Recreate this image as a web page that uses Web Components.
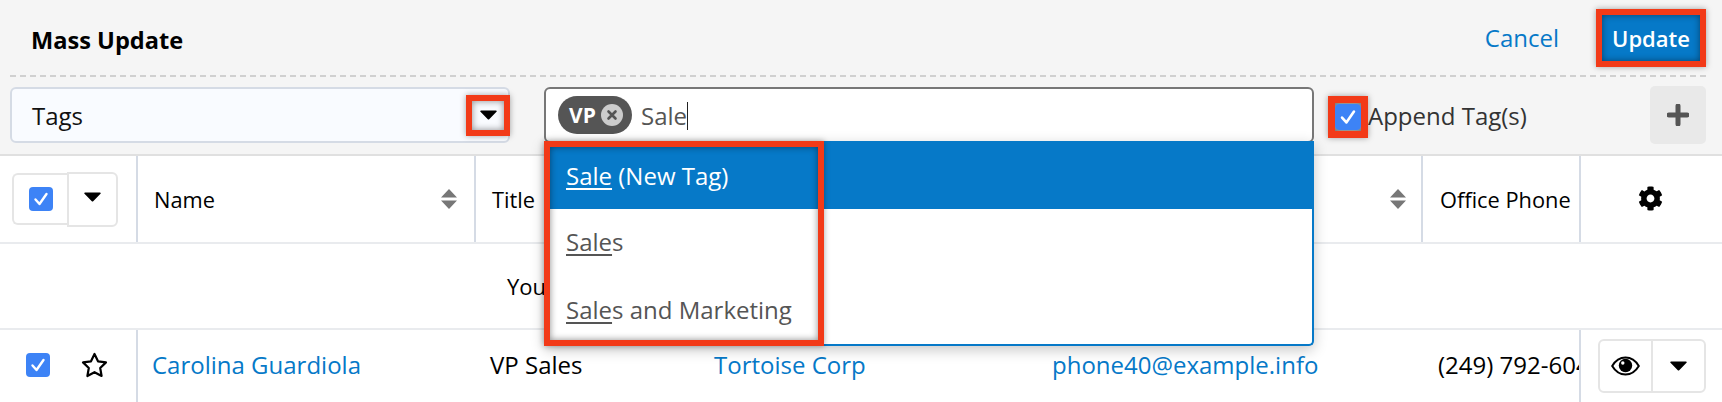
<!DOCTYPE html>
<html>
<head>
<meta charset="utf-8">
<title>Mass Update</title>
<style>
    html, body { margin: 0; padding: 0; background: #fff; overflow: hidden; height: 402px; }
    body { font-family: "Open Sans", "Liberation Sans", sans-serif; }
</style>
</head>
<body>
<mass-update>
    <tag-select></tag-select>
    <tag-input></tag-input>
</mass-update>
<list-table></list-table>

<script>
const caret = `<svg width="17" height="10" viewBox="0 0 17 10"><path d="M1 .5h15c.7 0 1 .8.5 1.3L9.2 9.2c-.4.4-1 .4-1.4 0L.5 1.8C0 1.3.3.5 1 .5z" fill="#000"/></svg>`;
const sortIcon = `<svg width="16" height="20" viewBox="0 0 16 20"><path d="M8 0l8 8.5H0zM0 11.5h16L8 20z" fill="#777"/></svg>`;
const checkBox = (size) => `<svg width="${size}" height="${size}" viewBox="0 0 24 24"><rect width="24" height="24" rx="4" fill="#3d83f6"/><path d="M6.5 12.5l4 4.5 7-10" fill="none" stroke="#fff" stroke-width="2.4" stroke-linecap="round" stroke-linejoin="round"/></svg>`;
const gear = `<svg width="25" height="25" viewBox="0 0 512 512"><path d="M487.4 315.7l-42.6-24.6c4.3-23.2 4.3-47 0-70.2l42.6-24.6c4.9-2.8 7.1-8.6 5.5-14-11.1-35.6-30-67.8-54.7-94.6-3.8-4.1-10-5.1-14.8-2.3L380.8 110c-17.9-15.4-38.5-27.3-60.8-35.1V25.8c0-5.6-3.9-10.5-9.4-11.7-36.7-8.2-74.3-7.8-109.2 0-5.5 1.2-9.4 6.1-9.4 11.7V75c-22.2 7.9-42.8 19.8-60.8 35.1L88.7 85.5c-4.9-2.8-11-1.9-14.8 2.3-24.7 26.7-43.6 58.9-54.7 94.6-1.7 5.4.6 11.2 5.5 14L67.3 221c-4.3 23.2-4.3 47 0 70.2l-42.6 24.6c-4.9 2.8-7.1 8.6-5.5 14 11.1 35.6 30 67.8 54.7 94.6 3.8 4.1 10 5.1 14.8 2.3l42.6-24.6c17.9 15.4 38.5 27.3 60.8 35.1v49.2c0 5.6 3.9 10.5 9.4 11.7 36.7 8.2 74.3 7.8 109.2 0 5.5-1.2 9.4-6.1 9.4-11.7v-49.2c22.2-7.9 42.8-19.8 60.8-35.1l42.6 24.6c4.9 2.8 11 1.9 14.8-2.3 24.7-26.7 43.6-58.9 54.7-94.6 1.5-5.5-.7-11.3-5.6-14.1zM256 336c-44.1 0-80-35.9-80-80s35.9-80 80-80 80 35.9 80 80-35.9 80-80 80z" fill="#000"/></svg>`;
const eye = `<svg width="29" height="20" viewBox="0 0 29 20"><path d="M1.2 10C4.5 4.4 9 1.5 14.5 1.5S24.5 4.4 27.8 10c-3.3 5.6-7.8 8.5-13.3 8.5S4.500 15.600 1.200 10z" fill="none" stroke="#000" stroke-width="2"/><circle cx="14.500" cy="9.500" r="6.700" fill="#000"/><circle cx="11.800" cy="7" r="1.700" fill="#fff"/></svg>`;
const star = `<svg width="27" height="26" viewBox="0 0 27 26"><path d="M13.500 2l3.500 7.300 8 1.100-5.800 5.600 1.400 8-7.100-3.800-7.100 3.800 1.400-8L2 10.400l8-1.100z" fill="none" stroke="#000" stroke-width="2.200" stroke-linejoin="round"/></svg>`;

// red annotation frame, sits in flow round whatever is slotted
class CallOut extends HTMLElement {
    connectedCallback() {
        this.attachShadow({ mode: 'open' }).innerHTML = `
        <style>
            :host {
                display: inline-flex;
                box-sizing: border-box;
                border: 6px solid #f23a18;
                box-shadow: 0 0 6px rgba(0,0,0,.35), inset 0 0 7px rgba(0,0,0,.45);
                align-items: center;
                justify-content: center;
            }
        </style>
        <slot></slot>`;
    }
}

class MassUpdate extends HTMLElement {
    connectedCallback() {
        this.attachShadow({ mode: 'open' }).innerHTML = `
        <style>
            :host { display: block; background: #f5f5f5; color: #000; border-bottom: 2px solid #e0e0e0; height: 154px; }
            .head {
                display: flex;
                align-items: center;
                height: 77px;
                box-sizing: border-box;
                margin: 0 16px 0 10px;
                padding-left: 21px;
                border-bottom: 2px dashed #d0d0d0;
            }
            h1 { font-size: 23.6px; font-weight: 700; margin: 5px auto 0 0; }
            a { color: #0679c8; font-size: 24px; margin: 0 37px 0 0; }
            call-out.update { width: 110px; height: 58px; background: #0679c8; color: #fff; font-size: 22px; font-weight: 600; }
            .fields { display: flex; align-items: center; padding: 9px 16px 0 10px; }
            call-out.check { width: 40px; height: 42px; margin-left: 14px; background: #b9b9b9; border-width: 7px; margin-top: 3px; }
            call-out.check svg { display: block; }
            label { font-size: 24px; color: #333; margin-top: 1px; }
            .plus {
                margin-left: auto;
                width: 56px;
                height: 58px;
                background: #e9e9e9;
                border-radius: 5px;
                display: flex;
                align-items: center;
                justify-content: center;
            }
            ::slotted(tag-input) { margin-left: 34px; }
        </style>
        <div class="head">
            <h1>Mass Update</h1>
            <a>Cancel</a>
            <call-out class="update">Update</call-out>
        </div>
        <div class="fields">
            <slot></slot>
            <call-out class="check">${checkBox(26)}</call-out>
            <label>Append Tag(s)</label>
            <div class="plus"><svg width="22" height="22" viewBox="0 0 22 22"><path d="M11 2v18M2 11h18" stroke="#555" stroke-width="5" stroke-linecap="round"/></svg></div>
        </div>`;
    }
}

class TagSelect extends HTMLElement {
    connectedCallback() {
        this.attachShadow({ mode: 'open' }).innerHTML = `
        <style>
            :host {
                display: flex;
                align-items: center;
                justify-content: space-between;
                box-sizing: border-box;
                width: 500px;
                height: 56px;
                background: #f9fbff;
                border: 2px solid #d5dbe5;
                border-radius: 6px;
                padding-left: 20px;
                font-size: 24px;
                color: #111;
            }
            call-out { width: 44px; height: 41px; margin: 0 -2px 0 0; }
        </style>
        <span>Tags</span>
        <call-out>${caret}</call-out>`;
    }
}

class TagInput extends HTMLElement {
    connectedCallback() {
        this.attachShadow({ mode: 'open' }).innerHTML = `
        <style>
            :host {
                display: flex;
                align-items: center;
                position: relative;
                z-index: 5;
                box-sizing: border-box;
                width: 770px;
                height: 56px;
                background: #fff;
                border: 2px solid #777;
                border-radius: 6px;
                padding-left: 12px;
                font-size: 24px;
                color: #555;
            }
            .pill {
                display: flex;
                align-items: center;
                box-sizing: border-box;
                width: 74px;
                height: 38px;
                border-radius: 19px;
                background: #555;
                color: #fff;
                font-weight: 700;
                font-size: 21px;
                padding-left: 11px;
                gap: 5px;
            }
            .x { display: block; }
            .typed { margin: 1px 0 0 9px; display: flex; align-items: center; }
            .cursor { width: 1px; height: 28px; background: #222; margin-left: 0; }
        </style>
        <div class="pill">VP <svg class="x" width="22" height="22" viewBox="0 0 22 22"><circle cx="11" cy="11" r="11" fill="#ccc"/><path d="M7.500 7.500l7 7M14.500 7.500l-7 7" stroke="#555" stroke-width="2.600" stroke-linecap="round"/></svg></div>
        <div class="typed">Sale<span class="cursor"></span></div>
        <tag-menu></tag-menu>`;
    }
}

class TagMenu extends HTMLElement {
    connectedCallback() {
        this.attachShadow({ mode: 'open' }).innerHTML = `
        <style>
            :host {
                display: block;
                position: absolute;
                left: -2px;
                right: -2px;
                top: 52px;
                height: 205px;
                box-sizing: border-box;
                background: #fff;
                border: 2px solid #0679c8;
                border-top: 0;
                border-radius: 0 0 5px 5px;
                box-shadow: 0 4px 14px rgba(0,0,0,.22);
                font-size: 24px;
                color: #555;
            }
            .row { display: flex; align-items: center; box-sizing: border-box; height: 68px; padding: 0 0 4px 20px; }
            .row.on { background: #0679c8; color: #fff; margin: 0 -2px; padding: 0 0 0 22px; }
            u { text-underline-offset: 3px; text-decoration-thickness: 2px; }
            call-out { position: absolute; left: -2px; top: 0; width: 280px; height: 205px; pointer-events: none; }
        </style>
        <div class="row on"><span><u>Sale</u> (New Tag)</span></div>
        <div class="row"><span><u>Sale</u>s</span></div>
        <div class="row"><span><u>Sale</u>s and Marketing</span></div>
        <call-out></call-out>`;
    }
}

class ListTable extends HTMLElement {
    connectedCallback() {
        this.attachShadow({ mode: 'open' }).innerHTML = `
        <style>
            :host { display: block; font-size: 24px; color: #000; }
            .grid {
                display: grid;
                grid-template-columns: 138px 338px 224px 338px 385px 158px 141px;
            }
            .cell { display: flex; align-items: center; box-sizing: border-box; min-width: 0; overflow: hidden; white-space: nowrap; }
            .sep { border-right: 2px solid #d5dbe5; }
            .head .cell { height: 86px; justify-content: space-between; padding: 0 15px 0 17px; font-size: 21.800px; }
            .head .name { padding-right: 17px; padding-left: 16px; }
            .head { border-bottom: 2px solid #e9ebee; }
            .head .cell.pick { padding: 0 0 0 12px; justify-content: flex-start; }
            .head .cell.tools { justify-content: center; padding: 0 2px 2px 0; }
            .pick .box {
                box-sizing: border-box;
                width: 56px;
                height: 52px;
                border: 2px solid #e5e5e5;
                border-right: 0;
                border-radius: 6px 0 0 6px;
                display: flex;
                align-items: center;
                justify-content: center;
                margin-right: -1px;
            }
            .pick .drop {
                box-sizing: border-box;
                width: 51px;
                height: 55px;
                border: 2px solid #e5e5e5;
                border-radius: 0 6px 6px 0;
                display: flex;
                justify-content: center;
                padding-top: 18px;
            }
            svg { display: block; flex: none; }
            .msg { height: 86px; border-bottom: 2px solid #e9ebee; display: flex; align-items: center; padding-left: 507px; box-sizing: border-box; font-size: 22px; }
            .body .cell { height: 72px; padding-bottom: 3px; }
            .body a { color: #0679c8; }
            .body .pick { padding-left: 26px; gap: 31px; }
            .group { display: flex; margin-left: 17px; width: 108px; height: 54px; box-sizing: border-box; border: 2px solid #e5e5e5; border-radius: 6px; margin-top: 3px; }
            .group div { flex: 1; display: flex; align-items: center; justify-content: center; }
            .group div + div { border-left: 2px solid #e5e5e5; }
        </style>
        <div class="grid head">
            <div class="cell pick sep"><div class="box">${checkBox(24)}</div><div class="drop">${caret}</div></div>
            <div class="cell sep name"><span>Name</span>${sortIcon}</div>
            <div class="cell" style="padding-left:16px"><span>Title</span></div>
            <div class="cell"></div>
            <div class="cell sep" style="justify-content:flex-end">${sortIcon}</div>
            <div class="cell sep"><span>Office Phone</span></div>
            <div class="cell tools">${gear}</div>
        </div>
        <div class="msg"><span>You</span></div>
        <div class="grid body">
            <div class="cell pick sep">${checkBox(24)}${star}</div>
            <div class="cell" style="padding-left:14px"><a>Carolina Guardiola</a></div>
            <div class="cell" style="padding-left:14px">VP Sales</div>
            <div class="cell" style="padding-left:14px"><a>Tortoise Corp</a></div>
            <div class="cell" style="padding-left:14px"><a>phone40@example.info</a></div>
            <div class="cell sep" style="padding-left:15px">(249) 792-6043</div>
            <div class="cell"><div class="group"><div>${eye}</div><div>${caret}</div></div></div>
        </div>`;
    }
}

customElements.define('call-out', CallOut);
customElements.define('mass-update', MassUpdate);
customElements.define('tag-select', TagSelect);
customElements.define('tag-input', TagInput);
customElements.define('tag-menu', TagMenu);
customElements.define('list-table', ListTable);
</script>
</body>
</html>
